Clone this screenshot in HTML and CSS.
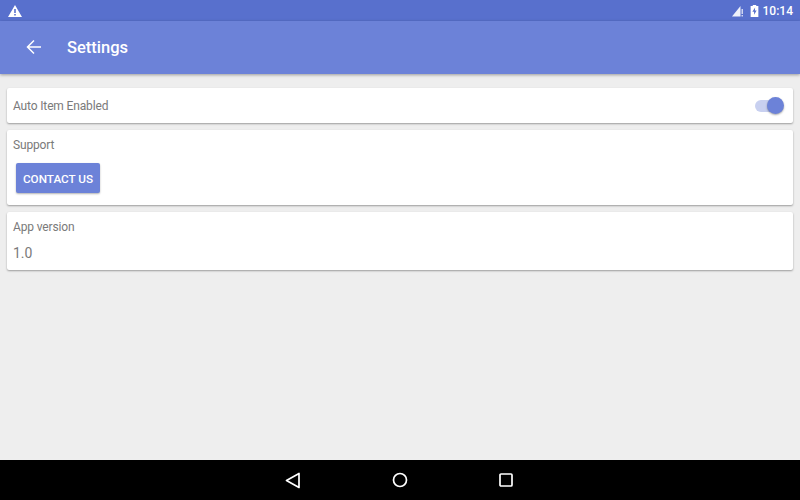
FILE: index.html
```html
<!DOCTYPE html>
<html lang="en">
<head>
    <meta charset="UTF-8">
    <meta name="viewport" content="width=device-width, initial-scale=1.0">
    <title>Settings</title>
    <link rel="stylesheet" href="styles.css">
</head>
<body>
    <div class="status-bar">
        <svg class="warn" width="14" height="12" viewBox="0 0 14 12"><path fill="#fff" fill-rule="evenodd" d="M7 0L14 12H0ZM6.200 4V8H7.800V4ZM6.200 9V10.600H7.800V9Z"/></svg>
        <div class="status-right">
            <svg width="14" height="12" viewBox="0 0 14 12"><path fill="#fff" opacity="0.9" d="M0 11.500L8.500 1V11.500Z"/><path fill="#fff" opacity="0.7" d="M9.500 4H11V9H9.500ZM9.500 10H11V11.500H9.500Z"/></svg>
            <svg width="9" height="12" viewBox="0 0 9 14"><path fill="#fff" fill-rule="evenodd" d="M2.500 0H6.500V1.200H9V14H0V1.200H2.500ZM5.200 3L2 8H4V11.500L7 6.500H5Z"/></svg>
            <span class="clock">10:14</span>
        </div>
    </div>
    <header class="app-bar">
        <svg class="back" width="16" height="16" viewBox="0 0 16 16"><path fill="none" stroke="#fff" stroke-width="1.500" d="M15 8H2M8 1.500L1.500 8L8 14.500"/></svg>
        <h1>Settings</h1>
    </header>
    <main class="content">
        <section class="card row-card">
            <span class="label">Auto Item Enabled</span>
            <div class="switch"><div class="track"></div><div class="thumb"></div></div>
        </section>
        <section class="card support-card">
            <div class="label">Support</div>
            <button class="btn">CONTACT US</button>
        </section>
        <section class="card version-card">
            <div class="label">App version</div>
            <div class="value">1.0</div>
        </section>
    </main>
    <nav class="nav-bar">
        <svg width="16" height="17" viewBox="0 0 16 17"><path fill="none" stroke="#fff" stroke-width="1.700" stroke-linejoin="round" d="M14 1.500V15.500L1.500 8.500Z"/></svg>
        <svg width="16" height="16" viewBox="0 0 16 16"><circle cx="8" cy="8" r="6.500" fill="none" stroke="#fff" stroke-width="1.700"/></svg>
        <svg width="14" height="14" viewBox="0 0 14 14"><rect x="1" y="1" width="12" height="12" rx="1" fill="none" stroke="#fff" stroke-width="1.700"/></svg>
    </nav>
</body>
</html>
```

FILE: styles.css
```css
* {
    box-sizing: border-box;
}
body {
    width: 800px;
    height: 500px;
    margin: 0;
    overflow: hidden;
    display: flex;
    flex-direction: column;
    font-family: Roboto, "Liberation Sans", sans-serif;
    background-color: #eeeeee;
}
.status-bar {
    height: 21px;
    display: flex;
    justify-content: space-between;
    align-items: center;
    padding: 0 7px 0 8px;
    background-color: #5870cd;
    color: white;
}
.status-right {
    display: flex;
    align-items: center;
    gap: 4px;
}
.clock {
    font-size: 12px;
    font-weight: 500;
}
.app-bar {
    height: 53px;
    display: flex;
    align-items: center;
    padding: 0 0 1px 26px;
    background-color: #6c82d8;
    box-shadow: 0 1px 3px rgba(0, 0, 0, 0.35);
    color: white;
}
.app-bar h1 {
    margin: 0 0 0 25px;
    font-size: 16.500px;
    font-weight: 500;
}
.content {
    flex: 1;
    display: flex;
    flex-direction: column;
    gap: 7px;
    padding: 14px 7px 0;
}
.card {
    padding: 0 6px;
    background-color: white;
    border-radius: 2px;
    box-shadow: 0 1px 2px rgba(0, 0, 0, 0.35);
}
.row-card {
    height: 35px;
    display: flex;
    justify-content: space-between;
    align-items: center;
    padding-right: 9px;
}
.support-card {
    height: 75px;
    padding-top: 7px;
}
.version-card {
    height: 58px;
    padding-top: 7px;
}
.label {
    font-size: 12px;
    line-height: 16px;
    letter-spacing: -0.150px;
    color: #7a7a7a;
}
.value {
    margin-top: 10px;
    font-size: 14px;
    line-height: 16px;
    color: #7a7a7a;
}
.btn {
    display: block;
    width: 84px;
    height: 30px;
    margin: 10px 0 0 3px;
    padding: 1px 0 0;
    border: none;
    border-radius: 2px;
    background-color: #6c82d8;
    box-shadow: 0 1px 2px rgba(0, 0, 0, 0.3);
    color: white;
    font-family: inherit;
    font-size: 11.700px;
    font-weight: 500;
}
.switch {
    position: relative;
    width: 29px;
    height: 18px;
}
.track {
    position: absolute;
    left: 0;
    top: 3px;
    width: 27px;
    height: 12px;
    border-radius: 6px;
    background-color: #c8d0f0;
}
.thumb {
    position: absolute;
    right: 0;
    top: 0;
    width: 17px;
    height: 17px;
    border-radius: 50%;
    background-color: #6c82d8;
    box-shadow: 0 1px 2px rgba(0, 0, 0, 0.35);
}
.nav-bar {
    height: 40px;
    display: flex;
    justify-content: center;
    align-items: center;
    gap: 91px;
    padding-right: 2px;
    background-color: black;
}
```
